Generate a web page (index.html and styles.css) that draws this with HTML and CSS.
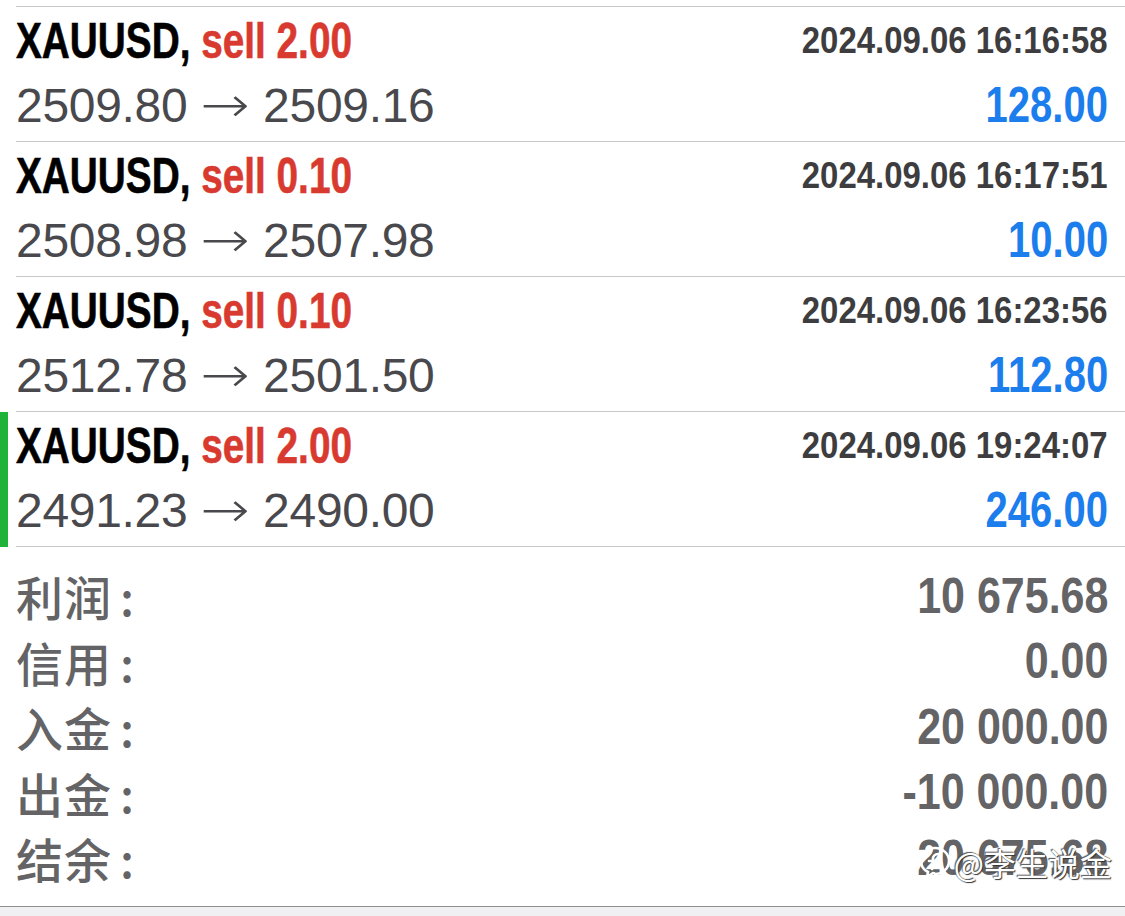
FILE: index.html
```html
<!DOCTYPE html>
<html>
<head>
	<meta charset="UTF-8">
	<meta name="viewport" content="width=device-width, initial-scale=1.0">
	<title>History</title>
<link rel="stylesheet" href="styles.css">
</head>
<body>
	<div class="list">
		<div class="trade">
			<div class="mark"></div>
			<div class="body">
				<div class="line">
					<span class="title">XAUUSD, <span class="sell">sell 2.00</span></span>
					<span class="time">2024.09.06 16:16:58</span>
				</div>
				<div class="line">
					<span class="price">2509.80 <span class="arrow">→</span> 2509.16</span>
					<span class="profit">128.00</span>
				</div>
			</div>
		</div>
		<div class="trade">
			<div class="mark"></div>
			<div class="body">
				<div class="line">
					<span class="title">XAUUSD, <span class="sell">sell 0.10</span></span>
					<span class="time">2024.09.06 16:17:51</span>
				</div>
				<div class="line">
					<span class="price">2508.98 <span class="arrow">→</span> 2507.98</span>
					<span class="profit">10.00</span>
				</div>
			</div>
		</div>
		<div class="trade">
			<div class="mark"></div>
			<div class="body">
				<div class="line">
					<span class="title">XAUUSD, <span class="sell">sell 0.10</span></span>
					<span class="time">2024.09.06 16:23:56</span>
				</div>
				<div class="line">
					<span class="price">2512.78 <span class="arrow">→</span> 2501.50</span>
					<span class="profit">112.80</span>
				</div>
			</div>
		</div>
		<div class="trade">
			<div class="mark green"></div>
			<div class="body">
				<div class="line">
					<span class="title">XAUUSD, <span class="sell">sell 2.00</span></span>
					<span class="time">2024.09.06 19:24:07</span>
				</div>
				<div class="line">
					<span class="price">2491.23 <span class="arrow">→</span> 2490.00</span>
					<span class="profit">246.00</span>
				</div>
			</div>
		</div>
	</div>

	<div class="summary">
		<div class="sum-row"><span class="label">利润<i>:</i></span><span class="val">10 675.68</span></div>
		<div class="sum-row"><span class="label">信用<i>:</i></span><span class="val">0.00</span></div>
		<div class="sum-row"><span class="label">入金<i>:</i></span><span class="val">20 000.00</span></div>
		<div class="sum-row"><span class="label">出金<i>:</i></span><span class="val">-10 000.00</span></div>
		<div class="sum-row">
			<span class="label">结余<i>:</i></span><span class="val">20 675.68</span>
			<!-- watermark over the last value -->
			<span class="watermark">
				<svg width="34" height="34" viewBox="0 0 34 34">
					<path d="M17 3 C9 3 3 9 3 16 C3 21 6 25 10 27 L9 32 L15 28 C16 28 17 29 17 29 C25 29 31 23 31 16 C31 9 25 3 17 3 Z" fill="none" stroke="#fff" stroke-width="2.6"/>
					<path d="M20 9 C17 9 15 11 15 14 L14 24 M11 16 L20 16" fill="none" stroke="#fff" stroke-width="2.6" stroke-linecap="round"/>
				</svg>
				@李生说金
			</span>
		</div>
	</div>
	<div class="footer"></div>
</body>
</html>
```

FILE: styles.css
```css
body {
	margin: 0;
	background: white;
	font-family: "Liberation Sans", Arial, sans-serif;
}
.list {
	padding-top: 6px;
}
.trade {
	display: flex;
}
.mark {
	width: 8px;
	flex: none;
}
.mark.green {
	background: #20b33a;
}
.body {
	flex: 1;
	margin-left: 8px;
	padding: 2px 17px 4px 0;
	border-bottom: 1px solid #c9c9cc;
}
.trade:first-child .body {
	border-top: 1px solid #c9c9cc;
}
.line {
	display: flex;
	justify-content: space-between;
	align-items: center;
	height: 64px;
}
.title {
	display: inline-block;
	font-size: 50px;
	font-weight: bold;
	color: #000;
	white-space: nowrap;
	transform: scaleX(.775);
	transform-origin: left center;
	-webkit-text-stroke: 0.6px #000;
}
.sell {
	color: #d83a30;
	-webkit-text-stroke: 0.6px #d83a30;
}
.time {
	display: inline-block;
	font-size: 37px;
	font-weight: bold;
	color: #3d3d40;
	white-space: nowrap;
	transform: scaleX(.89);
	transform-origin: right center;
}
.price {
	font-size: 48px;
	color: #49494d;
	white-space: nowrap;
	letter-spacing: -0.3px;
}
.arrow {
	display: inline-block;
	margin: 0 4px;
	font-family: "DejaVu Sans", sans-serif;
	font-size: 50px;
	font-weight: 300;
	transform: scaleX(1.18);
}
.profit {
	display: inline-block;
	font-size: 50px;
	font-weight: bold;
	color: #1c7ded;
	transform: scaleX(.8);
	transform-origin: right center;
}
.summary {
	padding: 16px 17px 15px 16px;
	border-bottom: 1px solid #8e8e91;
}
.sum-row {
	position: relative; /* for the watermark */
	display: flex;
	justify-content: space-between;
	align-items: center;
	height: 65.5px;
}
.label {
	font-family: "Noto Sans CJK SC", sans-serif;
	font-size: 47px;
	font-weight: 500;
	color: #646466;
	letter-spacing: 1px;
}
.label i {
	font-style: normal;
	margin-left: 8px;
}
.val {
	display: inline-block;
	font-size: 50px;
	font-weight: bold;
	color: #646466;
	white-space: nowrap;
	transform: scaleX(.86);
	transform-origin: right center;
}
.watermark {
	position: absolute;
	right: -4px;
	top: 14px;
	display: flex;
	align-items: center;
	gap: 2px;
	font-family: "Noto Sans CJK SC", sans-serif;
	font-size: 32px;
	color: #fff;
	text-shadow: 1px 1px 1px #333, -1px -1px 1px #555;
}
.footer {
	height: 9px;
	background: #f0f0f2;
}
```
